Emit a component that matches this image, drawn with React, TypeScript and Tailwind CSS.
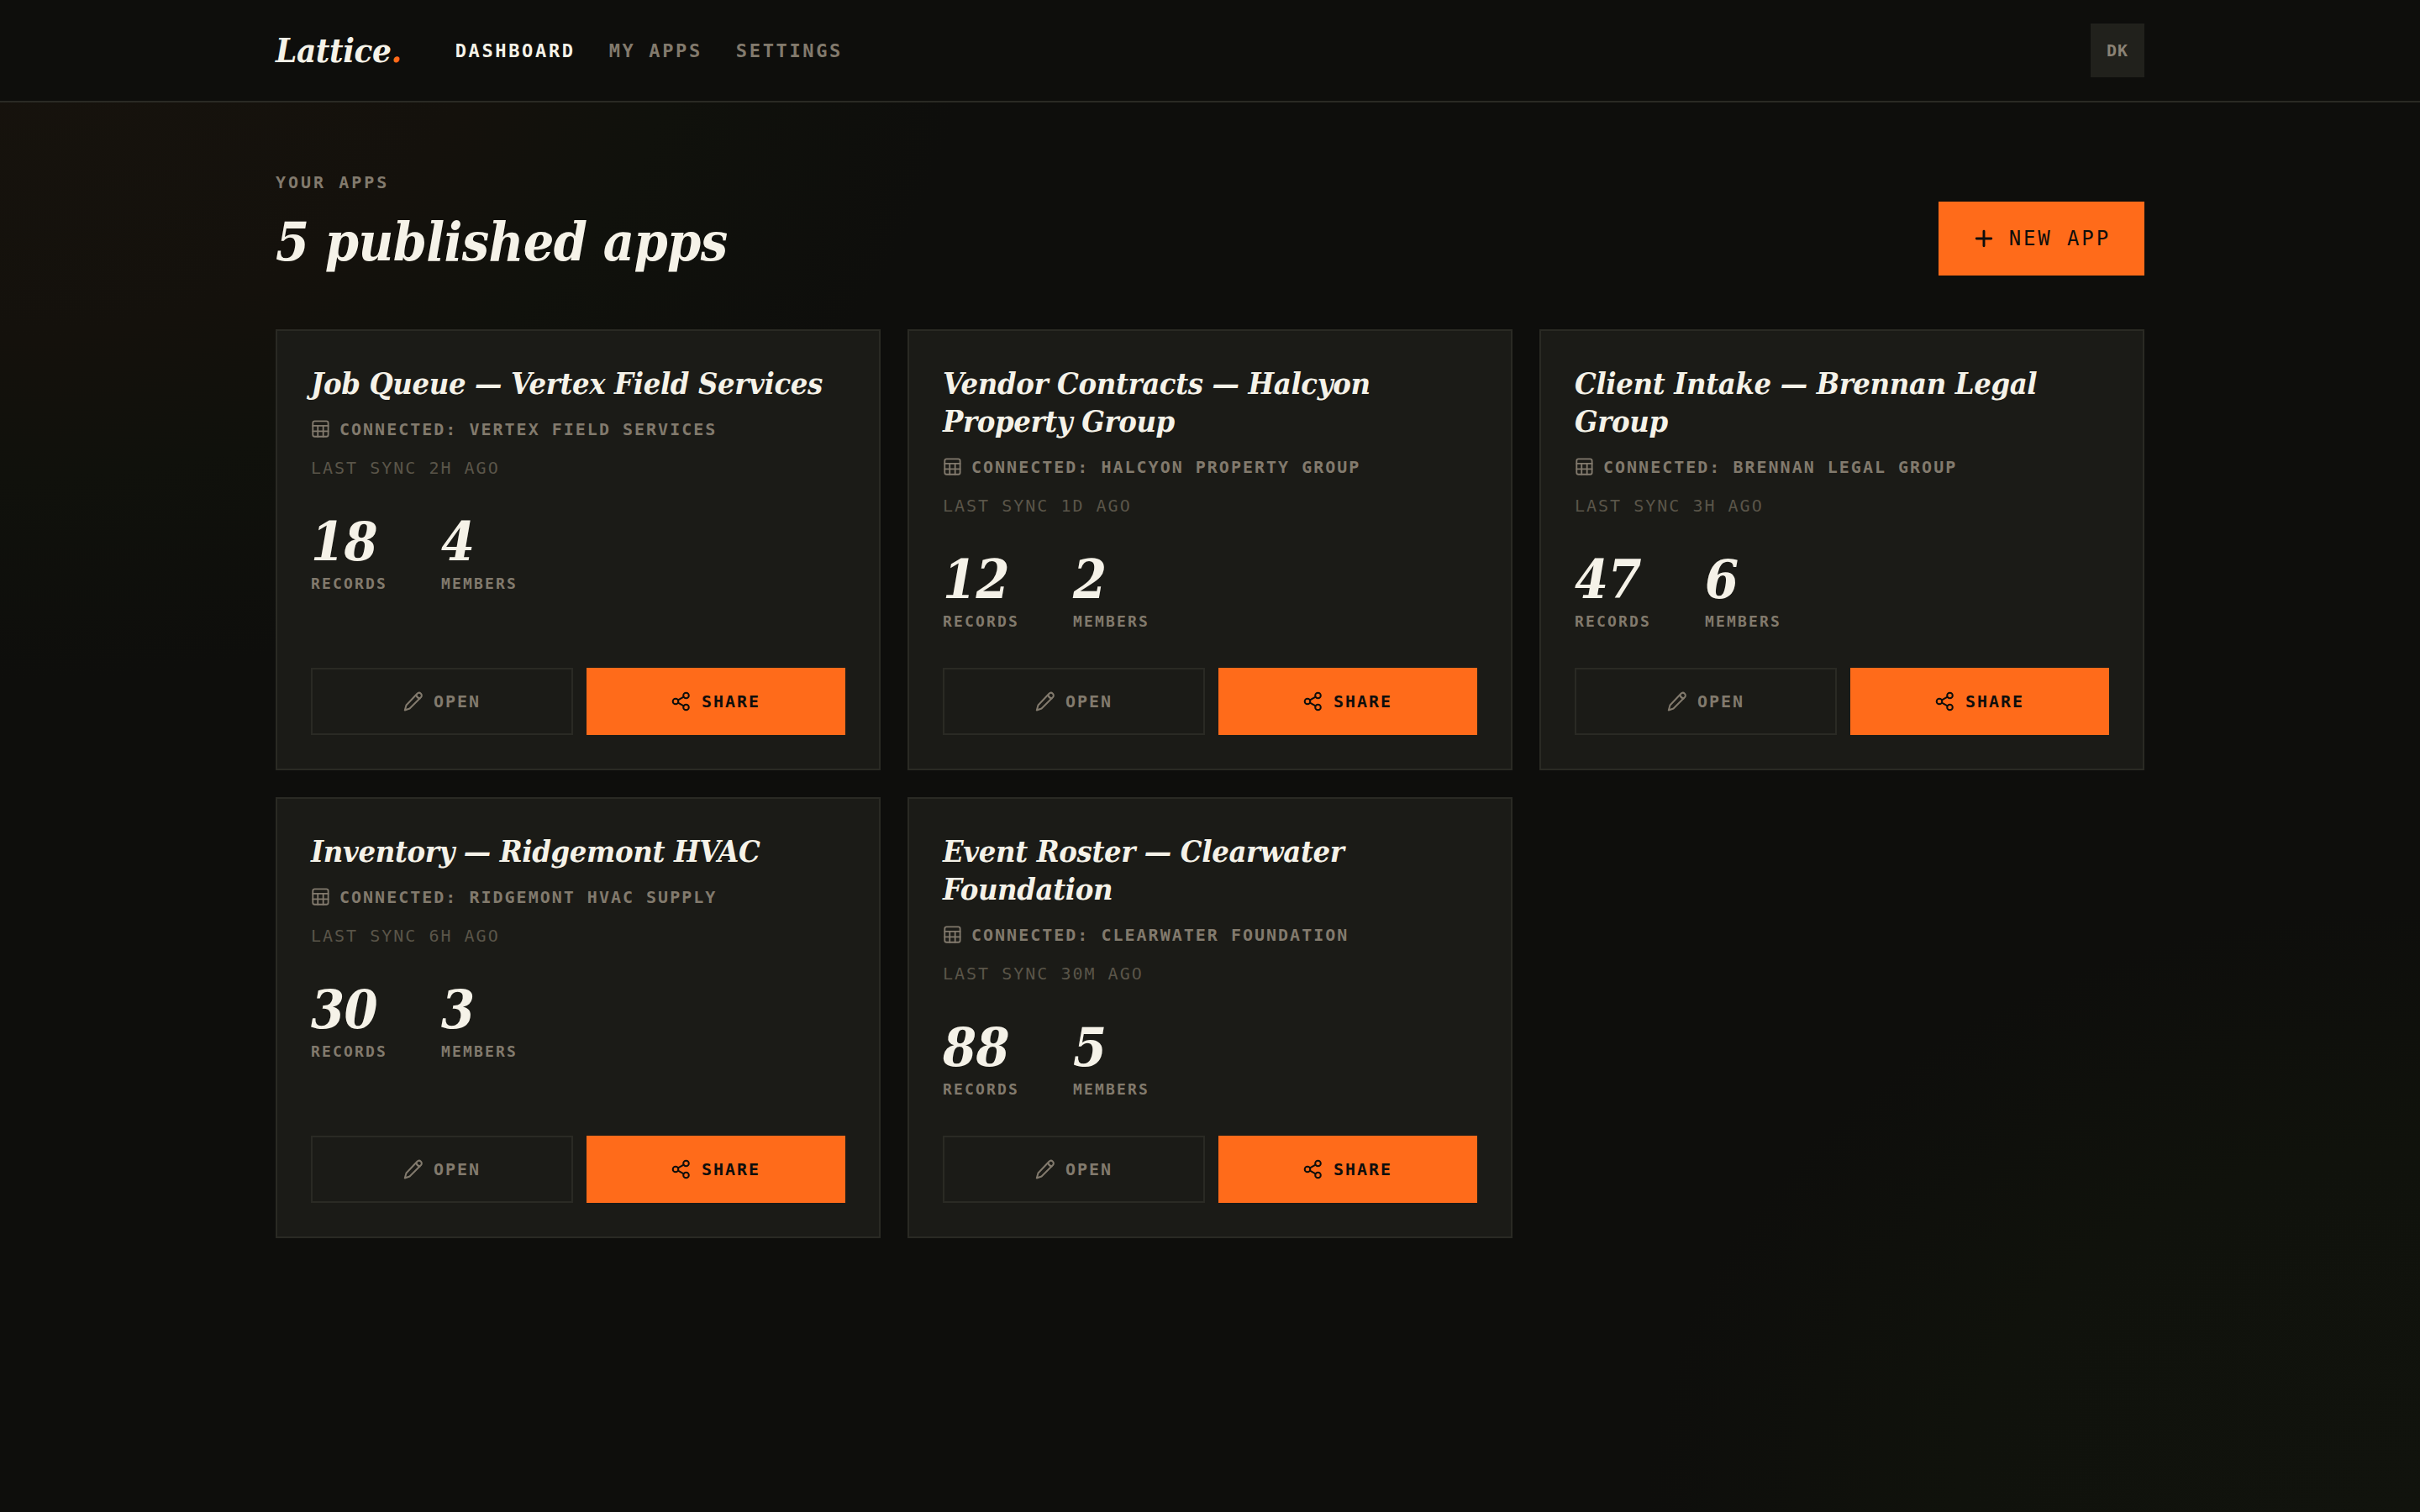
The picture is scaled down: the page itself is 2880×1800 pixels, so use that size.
import type { ReactNode } from 'react'

type AppInfo = {
    name: string
    source: string
    sync: string
    records: number
    members: number
}

const apps: AppInfo[] = [
    { name: 'Job Queue — Vertex Field Services', source: 'Vertex Field Services', sync: '2h ago', records: 18, members: 4 },
    { name: 'Vendor Contracts — Halcyon Property Group', source: 'Halcyon Property Group', sync: '1d ago', records: 12, members: 2 },
    { name: 'Client Intake — Brennan Legal Group', source: 'Brennan Legal Group', sync: '3h ago', records: 47, members: 6 },
    { name: 'Inventory — Ridgemont HVAC', source: 'Ridgemont HVAC Supply', sync: '6h ago', records: 30, members: 3 },
    { name: 'Event Roster — Clearwater Foundation', source: 'Clearwater Foundation', sync: '30m ago', records: 88, members: 5 },
]

const navLinks = [
    { label: 'Dashboard', active: true },
    { label: 'My Apps', active: false },
    { label: 'Settings', active: false },
]

function Icon({ className, children }: { className: string; children: ReactNode }) {
    return (
        <svg viewBox="0 0 24 24" fill="none" stroke="currentColor" strokeLinecap="round" strokeLinejoin="round" className={className} aria-hidden>
            {children}
        </svg>
    )
}

function Header() {
    return (
        <header className="border-b-2 border-[#2a2a24] bg-[#0e0e0c]">
            <div className="mx-auto flex h-[120px] max-w-[2320px] items-center px-12">
                <a href="#" className="font-['DejaVu_Serif_Condensed','DejaVu_Serif',serif] text-[40px] leading-none font-bold tracking-[-0.01em] italic">
                    Lattice<span className="text-[#ff6b1a]">.</span>
                </a>
                <nav className="ml-16 flex gap-10 text-[22px] font-bold tracking-[0.12em] uppercase">
                    {navLinks.map((link) => (
                        <a key={link.label} href="#" className={link.active ? 'text-[#f5f2e8]' : 'text-[#827a6d]'}>
                            {link.label}
                        </a>
                    ))}
                </nav>
                <button className="ml-auto size-16 bg-[#21211c] text-[20px] font-bold tracking-wider text-[#8a8275]">DK</button>
            </div>
        </header>
    )
}

function Stat({ value, label }: { value: number; label: string }) {
    return (
        <div>
            <div className="font-['DejaVu_Serif_Condensed','DejaVu_Serif',serif] text-[64px] leading-[64px] font-bold tracking-[-0.01em] italic">{value}</div>
            <div className="mt-1 text-[18px] leading-[28px] font-bold tracking-[0.12em] text-[#827a6d] uppercase">{label}</div>
        </div>
    )
}

function AppCard({ app }: { app: AppInfo }) {
    return (
        <article className="flex flex-col border-2 border-[#2a2a24] bg-[#1b1b17] p-10">
            <h2 className="font-['DejaVu_Serif_Condensed','DejaVu_Serif',serif] text-[36px] leading-[45px] font-bold tracking-[-0.01em] italic">{app.name}</h2>
            <p className="mt-4 flex items-center gap-3 text-[20px] leading-[32px] font-bold tracking-widest text-[#827a6d] uppercase">
                <Icon className="size-[22px] stroke-2">
                    <rect x="2.5" y="1.5" width="20" height="20" rx="2.5" />
                    <path d="M2.5 7.500h20M2.5 14.500h20M9 7.500v14M16 7.500v14" />
                </Icon>
                Connected: {app.source}
            </p>
            <p className="mt-3.5 text-[20px] leading-[32px] tracking-widest text-[#5a5549] uppercase">Last sync {app.sync}</p>
            <div className="mt-10 flex gap-16">
                <Stat value={app.records} label="Records" />
                <Stat value={app.members} label="Members" />
            </div>
            <div className="mt-auto flex gap-4 pt-[41px]">
                <button className="flex h-20 flex-1 items-center justify-center gap-3 border-2 border-[#2a2a24] text-[20px] font-bold tracking-widest text-[#827a6d] uppercase">
                    <Icon className="size-6 stroke-2">
                        <path d="M16.5 2.800a3 3 0 0 1 4.500 4.200L7.500 20.500l-5.700 2 1.700-6z" />
                        <path d="M15.500 4.500c.5 2.500 1.700 3.700 4 4" />
                    </Icon>
                    Open
                </button>
                <button className="flex h-20 flex-1 items-center justify-center gap-3 bg-[#ff6b1a] text-[20px] font-bold tracking-widest text-[#0e0e0c] uppercase">
                    <Icon className="size-6 stroke-2">
                        <circle cx="17.5" cy="5" r="3.300" />
                        <circle cx="5" cy="12" r="3.300" />
                        <circle cx="17.5" cy="19" r="3.300" />
                        <path d="m8 13.600 6.600 3.700M14.600 6.700 8 10.400" />
                    </Icon>
                    Share
                </button>
            </div>
        </article>
    )
}

export default function App() {
    return (
        <div className="min-h-screen bg-[#0e0e0c] bg-[radial-gradient(ellipse_40%_45%_at_0%_0%,#17130d,#14110c_50%,#10110c_70%,transparent),radial-gradient(ellipse_32%_40%_at_100%_100%,#11130d,#10120c_60%,transparent)] font-['DejaVu_Sans_Mono',monospace] text-[#f5f2e8]">
            <Header />
            <main className="mx-auto max-w-[2320px] px-12 pt-20 pb-20">
                <div className="flex items-end justify-between">
                    <div>
                        <p className="text-[20px] leading-[30px] font-bold tracking-[0.15em] text-[#827a6d] uppercase">Your Apps</p>
                        <h1 className="mt-4 font-['DejaVu_Serif_Condensed','DejaVu_Serif',serif] text-[64px] leading-[80px] font-bold tracking-[-0.01em] italic">
                            {apps.length} published apps
                        </h1>
                    </div>
                    <button className="flex h-[88px] items-center gap-4 bg-[#ff6b1a] px-10 text-[24px] tracking-[0.12em] text-[#0e0e0c] uppercase">
                        <Icon className="size-7 stroke-[2.5]">
                            <path d="M12 4.500v15M4.500 12h15" />
                        </Icon>
                        New App
                    </button>
                </div>
                <div className="mt-16 grid grid-cols-3 gap-8">
                    {apps.map((app) => (
                        <AppCard key={app.name} app={app} />
                    ))}
                </div>
            </main>
        </div>
    )
}
